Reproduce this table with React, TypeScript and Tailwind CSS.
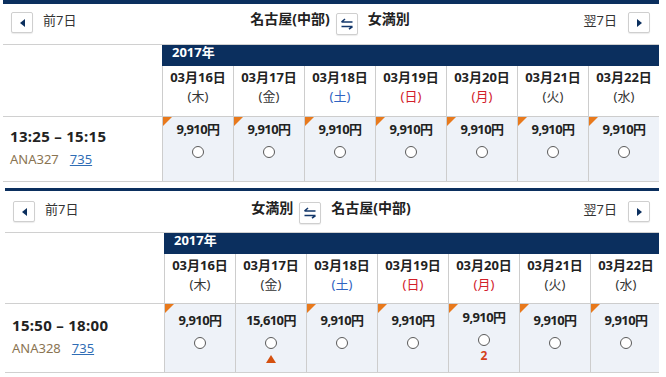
import React, { FC } from 'react'

type Fare = { price: string; tag: boolean; mark?: 'up' | 'seat'; lift?: boolean }

type Section = {
  from: string
  to: string
  time: string
  flight: string
  fares: Fare[]
  wrap: string
  head: string
  dateRow: string
  fareRow: string
  farePad: string
}

const days = [
  { date: '03月16日', day: '(木)', tone: 'text-[#333]' },
  { date: '03月17日', day: '(金)', tone: 'text-[#333]' },
  { date: '03月18日', day: '(土)', tone: 'text-[#2f63c2]' },
  { date: '03月19日', day: '(日)', tone: 'text-[#d2202a]' },
  { date: '03月20日', day: '(月)', tone: 'text-[#d2202a]' },
  { date: '03月21日', day: '(火)', tone: 'text-[#333]' },
  { date: '03月22日', day: '(水)', tone: 'text-[#333]' },
]

const plain: Fare = { price: '9,910円', tag: true }

const sections: Section[] = [
  {
    from: '名古屋(中部)',
    to: '女満別',
    time: '13:25 – 15:15',
    flight: 'ANA327',
    fares: [plain, plain, plain, plain, plain, plain, plain],
    wrap: 'ml-[3px] w-[656px] border-t-[4px]',
    head: 'h-[41px] pt-[8px]',
    dateRow: 'h-[51px]',
    fareRow: 'h-[65px]',
    farePad: 'pt-[4px]',
  },
  {
    from: '女満別',
    to: '名古屋(中部)',
    time: '15:50 – 18:00',
    flight: 'ANA328',
    fares: [
      plain,
      { price: '15,610円', tag: false, mark: 'up' },
      plain,
      plain,
      { price: '9,910円', tag: true, mark: 'seat', lift: true },
      plain,
      plain,
    ],
    wrap: 'ml-[5px] mt-[6px] w-[654px] border-t-[3px]',
    head: 'h-[42px] pt-[10px]',
    dateRow: 'h-[50px]',
    fareRow: 'h-[69px]',
    farePad: 'pt-[8px]',
  },
]

const NavButton: FC<{ dir: 'prev' | 'next' }> = ({ dir }) => (
  <span className="flex h-[21px] w-[22px] items-center justify-center rounded-[2px] border border-[#cfcfcf] bg-white shadow-[0_1px_1px_rgba(0,0,0,0.08)]">
    {dir === 'prev' ? (
      <span className="h-0 w-0 border-y-[4px] border-r-[5px] border-y-transparent border-r-[#0b2f5e]" />
    ) : (
      <span className="h-0 w-0 border-y-[4px] border-l-[5px] border-y-transparent border-l-[#0b2f5e]" />
    )}
  </span>
)

const SwapButton: FC = () => (
  <span className="ml-[6px] mr-[10px] mt-[1px] flex h-[22px] w-[22px] items-center justify-center rounded-[2px] border border-[#cfcfcf] bg-white shadow-[0_1px_1px_rgba(0,0,0,0.08)]">
    <svg width="14" height="12" viewBox="0 0 14 12" fill="none">
      <path d="M1.5 4H12.5M1.5 4L5 1" stroke="#14386b" strokeWidth="1.6" />
      <path d="M1.5 8.5H12.5M12.5 8.5L9 11.2" stroke="#14386b" strokeWidth="1.6" />
    </svg>
  </span>
)

const FareCell: FC<{ fare: Fare; pad: string }> = ({ fare, pad }) => (
  <div
    className={`relative flex flex-col items-center border-l border-[#cdcdcd] bg-[#eef2f8] ${
      fare.lift ? 'pt-[5px]' : pad
    }`}
  >
    {fare.tag && (
      <span className="absolute left-0 top-0 h-0 w-0 border-r-[9px] border-t-[9px] border-r-transparent border-t-[#e8791c]" />
    )}
    <span className="text-[13px] font-bold leading-[16px] tracking-[-0.6px] text-[#222]">
      {fare.price}
    </span>
    <span className="mt-[9px] h-[12px] w-[12px] rounded-full border border-[#5a5a5a] bg-white" />
    {fare.mark === 'up' && (
      <span className="mt-[6px] h-0 w-0 border-x-[5px] border-b-[8px] border-x-transparent border-b-[#d4500f]" />
    )}
    {fare.mark === 'seat' && (
      <span className="mt-[3px] text-[12px] font-bold leading-[14px] text-[#d4401a]">2</span>
    )}
  </div>
)

const FlightTable: FC<{ s: Section }> = ({ s }) => (
  <div className={`overflow-hidden border-[#0b2f5e] ${s.wrap}`}>
    <div className={`flex items-start justify-between border-b border-[#d0d0d0] pl-[8px] pr-[9px] ${s.head}`}>
      <div className="flex items-start">
        <NavButton dir="prev" />
        <span className="ml-[10px] text-[13px] leading-[17px] text-[#333]">前7日</span>
      </div>
      <div className="flex items-start">
        <span className="text-[14px] font-bold leading-[14px] text-[#222]">{s.from}</span>
        <SwapButton />
        <span className="text-[14px] font-bold leading-[14px] text-[#222]">{s.to}</span>
      </div>
      <div className="flex items-start">
        <span className="mr-[11px] text-[13px] leading-[17px] text-[#333]">翌7日</span>
        <NavButton dir="next" />
      </div>
    </div>
    <div className="grid grid-cols-[159px_repeat(7,71px)]">
      <div className="row-span-2 border-b border-[#d0d0d0] bg-white" />
      <div className="col-span-7 h-[21px] bg-[#0b2f5e] pl-[10px] text-[13px] font-bold leading-[15px] text-white">
        2017年
      </div>
      {days.map((d) => (
        <div
          key={d.date}
          className={`flex flex-col items-center border-b border-l border-[#cdcdcd] pt-[3px] ${s.dateRow}`}
        >
          <span className="text-[13px] font-bold leading-[17px] text-[#222]">{d.date}</span>
          <span className={`mt-[2px] text-[13px] leading-[17px] ${d.tone}`}>{d.day}</span>
        </div>
      ))}
      <div className={`flex flex-col justify-center border-b border-[#d0d0d0] pb-[4px] pl-[7px] ${s.fareRow}`}>
        <span className="text-[15px] font-bold leading-[20px] tracking-[0.3px] text-[#222]">{s.time}</span>
        <span className="mt-[5px] flex text-[13px] leading-[17px]">
          <span className="text-[#8a7452]">{s.flight}</span>
          <span className="ml-[11px] text-[#2f6db5] underline">735</span>
        </span>
      </div>
      {s.fares.map((f, i) => (
        <div key={i} className={`grid border-b border-[#d0d0d0] ${s.fareRow}`}>
          <FareCell fare={f} pad={s.farePad} />
        </div>
      ))}
    </div>
  </div>
)

export default function App() {
  return (
    <div className="h-[377px] w-[666px] overflow-hidden bg-white font-['Noto_Sans','Noto_Sans_CJK_JP',sans-serif]">
      {sections.map((s) => (
        <FlightTable key={s.time} s={s} />
      ))}
    </div>
  )
}
